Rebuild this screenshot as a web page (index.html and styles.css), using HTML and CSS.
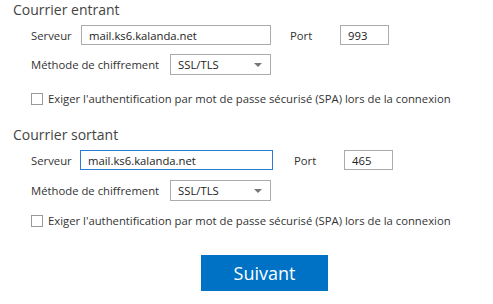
FILE: index.html
```html
<!DOCTYPE html>
<html lang="fr">
<head>
<meta charset="utf-8">
<link rel="stylesheet" href="styles.css">
</head>
<body>
<div class="page">
  <section class="group g-in">
    <h2 class="title">Courrier entrant</h2>
    <div class="row r-server">
      <span class="lbl l-server">Serveur</span>
      <div class="field f-server">mail.ks6.kalanda.net</div>
      <span class="lbl l-port">Port</span>
      <div class="field f-port">993</div>
    </div>
    <div class="row r-method">
      <span class="lbl l-method">Méthode de chiffrement</span>
      <div class="field select f-select"><span>SSL/TLS</span><span class="arrow"></span></div>
    </div>
    <label class="row r-check"><span class="box"></span><span class="ctext">Exiger l'authentification par mot de passe sécurisé (SPA) lors de la connexion</span></label>
  </section>
  <section class="group g-out">
    <h2 class="title">Courrier sortant</h2>
    <div class="row r-server">
      <span class="lbl l-server">Serveur</span>
      <div class="field f-server focus">mail.ks6.kalanda.net</div>
      <span class="lbl l-port">Port</span>
      <div class="field f-port">465</div>
    </div>
    <div class="row r-method">
      <span class="lbl l-method">Méthode de chiffrement</span>
      <div class="field select f-select"><span>SSL/TLS</span><span class="arrow"></span></div>
    </div>
    <label class="row r-check"><span class="box"></span><span class="ctext">Exiger l'authentification par mot de passe sécurisé (SPA) lors de la connexion</span></label>
  </section>
  <div class="actions"><button class="next">Suivant</button></div>
</div>
</body>
</html>
```
FILE: styles.css
```css
html, body { margin: 0; padding: 0; background: #fff; }
body {
  font-family: "Open Sans", "Noto Sans", sans-serif;
  font-size: 11.3px;
  color: #333;
  width: 493px;
  height: 304px;
  overflow: hidden;
}
.page { display: flex; flex-direction: column; }
.title {
  margin: 0 0 0 13px;
  font-size: 14px;
  font-weight: normal;
  line-height: 20px;
  color: #444;
}
.row { display: flex; align-items: center; padding-left: 31px; }
.lbl { flex: none; white-space: nowrap; }
.field {
  box-sizing: border-box;
  border: 1px solid #ababab;
  background: #fff;
  height: 20px;
  display: flex;
  align-items: center;
  padding-left: 7px;
  color: #222;
  flex: none;
}
.field.focus { border-color: #2b7cd3; }
.select { justify-content: space-between; padding-right: 8px; height: 21px; }
.arrow {
  width: 0; height: 0;
  border-left: 4px solid transparent;
  border-right: 4px solid transparent;
  border-top: 4px solid #777;
}
.r-check { padding-left: 31px; gap: 5px; }
.box {
  box-sizing: border-box;
  width: 12px; height: 12px;
  border: 1px solid #9a9a9a;
  background: #fff;
  flex: none;
}
.ctext { white-space: nowrap; }

.l-method { width: 139px; }
.f-select { width: 101px; }

/* incoming */
.g-in .r-server { margin-top: 5px; }
.g-in .l-server { width: 50px; }
.g-in .f-server { width: 190px; }
.g-in .l-port { margin-left: 19px; width: 50px; }
.g-in .f-port { width: 49px; }
.g-in .r-method { margin-top: 9px; }
.g-in .r-check { margin-top: 16px; }

/* outgoing */
.g-out { margin-top: 19px; }
.g-out .r-server { margin-top: 5px; }
.g-out .l-server { width: 49px; }
.g-out .f-server { width: 193px; }
.g-out .l-port { margin-left: 21px; width: 50px; }
.g-out .f-port { width: 49px; }
.g-out .r-method { margin-top: 10px; }
.g-out .r-check { margin-top: 12px; }

.actions { display: flex; justify-content: flex-start; padding-left: 201px; margin-top: 27px; }
.next {
  width: 127px;
  height: 36px;
  border: none;
  background: #0072c6;
  color: #fff;
  font-family: "Open Sans", "Noto Sans", sans-serif;
  font-size: 18px;
  padding: 0;
  cursor: pointer;
}
```
